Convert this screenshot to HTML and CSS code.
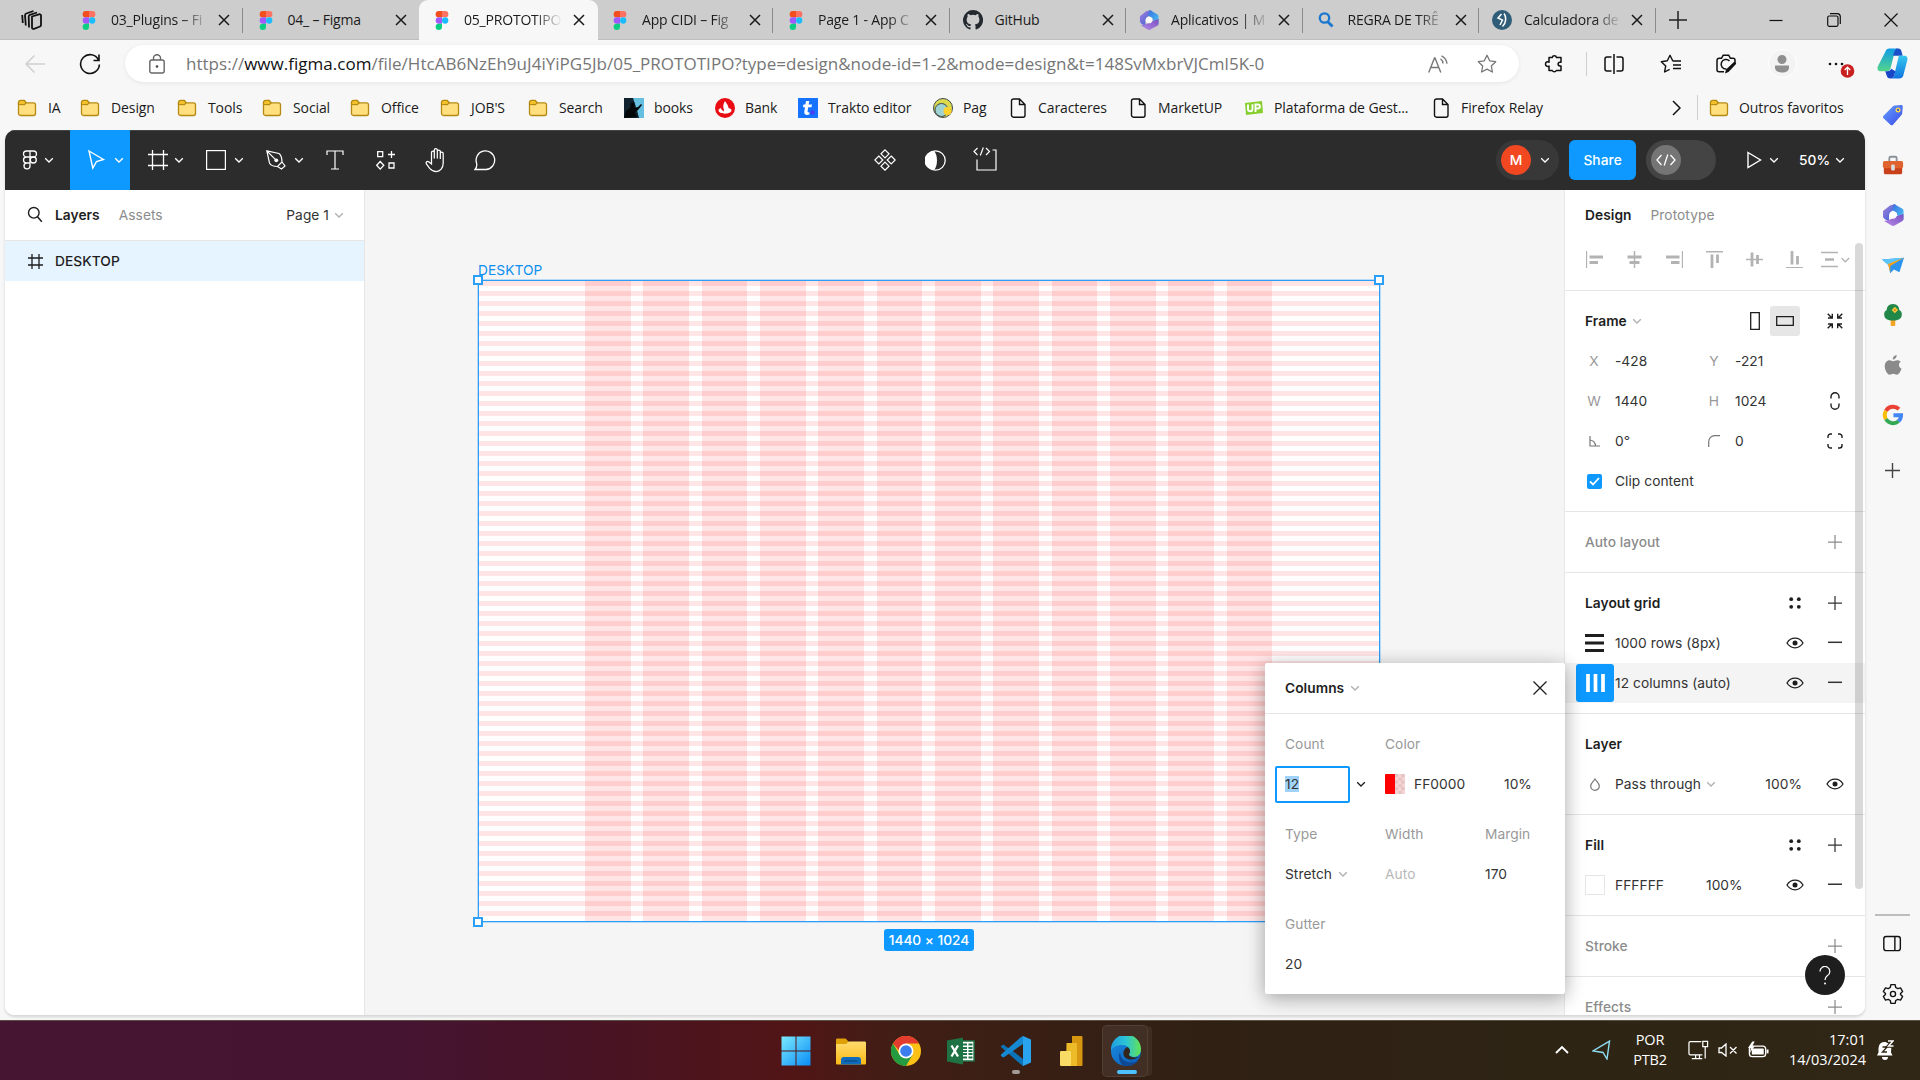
FILE: index.html
```html
<!DOCTYPE html>
<html lang="pt-BR">
<head>
<meta charset="utf-8">
<title>05_PROTOTIPO – Figma</title>
<link rel="stylesheet" href="styles.css">
</head>
<body>
<svg class="defs" aria-hidden="true">
  <defs>
    <linearGradient id="g-m1" x1="0" y1="0" x2="1" y2="1"><stop offset="0" stop-color="#a77fe0"/><stop offset="1" stop-color="#2b5fd0"/></linearGradient>
    <linearGradient id="g-m2" x1="0" y1="0" x2="1" y2="1"><stop offset="0" stop-color="#3a6fe0"/><stop offset="1" stop-color="#4cc6f5"/></linearGradient>
    <linearGradient id="g-m3" x1="0" y1="1" x2="1" y2="0"><stop offset="0" stop-color="#b58be8"/><stop offset="1" stop-color="#7a4fc0"/></linearGradient>
    <linearGradient id="g-win" x1="0" y1="0" x2="1" y2="1"><stop offset="0" stop-color="#7aeaff"/><stop offset="1" stop-color="#0a8cf5"/></linearGradient>
    <linearGradient id="g-fold" x1="0" y1="0" x2="0" y2="1"><stop offset="0" stop-color="#ffdc6e"/><stop offset="1" stop-color="#fbb915"/></linearGradient>
    <linearGradient id="g-edge1" x1="0" y1="0" x2="1" y2="0"><stop offset="0" stop-color="#1f9fe0"/><stop offset=".5" stop-color="#2cc3d5"/><stop offset="1" stop-color="#63e353"/></linearGradient>
    <linearGradient id="g-edge2" x1="0" y1="0" x2="1" y2="1"><stop offset="0" stop-color="#1c8fe0"/><stop offset="1" stop-color="#0a58b8"/></linearGradient>
    <linearGradient id="g-cop1" x1="0" y1="0" x2="0" y2="1"><stop offset="0" stop-color="#0f9be8"/><stop offset="1" stop-color="#54d68a"/></linearGradient>
    <linearGradient id="g-cop2" x1="0" y1="0" x2="0" y2="1"><stop offset="0" stop-color="#35c8ee"/><stop offset="1" stop-color="#1173e0"/></linearGradient>
    <linearGradient id="g-tag" x1="0" y1="0" x2="1" y2="1"><stop offset="0" stop-color="#62a2ff"/><stop offset="1" stop-color="#3d49e8"/></linearGradient>

    <symbol id="figma" viewBox="0 0 12 18">
      <path fill="#f24e1e" d="M6 0H3a3 3 0 0 0 0 6h3z"/><path fill="#ff7262" d="M6 0h3a3 3 0 0 1 0 6H6z"/>
      <path fill="#a259ff" d="M6 6H3a3 3 0 0 0 0 6h3z"/><circle fill="#1abcfe" cx="9" cy="9" r="3"/>
      <path fill="#0acf83" d="M6 12H3a3 3 0 1 0 3 3z"/>
    </symbol>
    <symbol id="close" viewBox="0 0 12 12"><path d="M1 1l10 10M11 1L1 11" fill="none" stroke="currentColor" stroke-width="1.5"/></symbol>
    <symbol id="folder" viewBox="0 0 20 20">
      <path d="M1.5 4.5a2 2 0 0 1 2-2h3.700l2 2.400H16.500a2 2 0 0 1 2 2V15.500a2 2 0 0 1-2 2h-13a2 2 0 0 1-2-2z" fill="#ffdf7e" stroke="#b58a12" stroke-width="1.300"/>
      <path d="M1.500 6.500v-2a2 2 0 0 1 2-2h3.700l2 2.200-1.800 2z" fill="#f2c12c" stroke="#b58a12" stroke-width="1.200"/>
    </symbol>
    <symbol id="page" viewBox="0 0 16 20"><path d="M3.500 1h6L15 6.500v10.700a2 2 0 0 1-2 2H3.500a2 2 0 0 1-2-2V3a2 2 0 0 1 2-2zM9.500 1.200v5.300h5.300" fill="none" stroke="#111" stroke-width="1.400"/></symbol>
    <symbol id="chev" viewBox="0 0 10 10"><path d="M1.200 3.200L5 7l3.800-3.800" fill="none" stroke="currentColor" stroke-width="1.300"/></symbol>
    <symbol id="plus" viewBox="0 0 16 16"><path d="M8 1v14M1 8h14" fill="none" stroke="currentColor" stroke-width="1.250"/></symbol>
    <symbol id="minus" viewBox="0 0 16 16"><path d="M1 7.300h14" fill="none" stroke="currentColor" stroke-width="1.500"/></symbol>
    <symbol id="eye" viewBox="0 0 18 12"><path d="M1 6C3 2.800 5.800 1.200 9 1.200S15 2.800 17 6c-2 3.200-4.800 4.800-8 4.800S3 9.200 1 6z" fill="none" stroke="#1e1e1e" stroke-width="1.300"/><circle cx="9" cy="6" r="2.500" fill="#1e1e1e"/></symbol>
    <symbol id="dots" viewBox="0 0 12 12"><g fill="#1e1e1e"><circle cx="2.200" cy="2.200" r="1.900"/><circle cx="9.800" cy="2.200" r="1.900"/><circle cx="2.200" cy="9.800" r="1.900"/><circle cx="9.800" cy="9.800" r="1.900"/></g></symbol>
    <symbol id="m365" viewBox="0 0 22 22">
      <path d="M8 1.500L13 0l2 3-5 4-3 4v6.500L2.500 15 1 13V7z" fill="url(#g-m1)"/>
      <path d="M12 0l8 4.600c1 .6 1.500 1.400 1.500 2.400v8.500L15 11V9l-5-3z" fill="url(#g-m2)"/>
      <path d="M21.500 10v5c0 1-.5 1.800-1.400 2.300l-7.500 4.200a3 3 0 0 1-3 0L2 17l5-1 8-4z" fill="url(#g-m3)"/>
      <circle cx="11" cy="11" r="3.700" fill="#fff" opacity=".92"/>
    </symbol>
  </defs>
</svg>

<header class="tabs">
  <svg class="workspaces" viewBox="0 0 22 22"><g fill="none" stroke="#111" stroke-width="1.800" stroke-linejoin="round"><path d="M11 7.500l7-2.200c1-.3 2 .3 2 1.300v9.500c0 .7-.4 1.200-1 1.400l-6 2.300c-1 .4-2-.2-2-1.300z"/><path d="M8 18.500l-.3-11c0-.8.4-1.400 1.200-1.700L16 3.500"/><path d="M4.800 16.500L4 6.500c0-1 .5-1.700 1.300-2L12.500 2"/><path d="M1.800 14L1.200 6"/></g></svg>
  <div class="tab"><svg class="fav-figma"><use href="#figma"/></svg><span class="tab-title">03_Plugins – Fi</span><svg class="tab-x"><use href="#close"/></svg></div>
  <div class="tab no-div"><svg class="fav-figma"><use href="#figma"/></svg><span class="tab-title whole">04_ – Figma</span><svg class="tab-x"><use href="#close"/></svg></div>
  <div class="tab active"><svg class="fav-figma"><use href="#figma"/></svg><span class="tab-title">05_PROTOTIPO</span><svg class="tab-x"><use href="#close"/></svg></div>
  <div class="tab"><svg class="fav-figma"><use href="#figma"/></svg><span class="tab-title">App CIDI – Fig</span><svg class="tab-x"><use href="#close"/></svg></div>
  <div class="tab"><svg class="fav-figma"><use href="#figma"/></svg><span class="tab-title">Page 1 - App C</span><svg class="tab-x"><use href="#close"/></svg></div>
  <div class="tab"><svg class="fav" viewBox="0 0 16 16"><path fill="#24292f" d="M8 0a8 8 0 0 0-2.530 15.590c.4.070.55-.17.550-.38v-1.490c-2.010.37-2.530-.49-2.690-.94-.09-.23-.48-.94-.82-1.130-.28-.15-.68-.52-.01-.53.63-.01 1.080.58 1.230.82.720 1.210 1.870.87 2.330.66.070-.52.280-.87.510-1.070-1.780-.2-3.640-.89-3.640-3.950 0-.87.310-1.590.82-2.150-.08-.2-.36-1.020.08-2.120 0 0 .67-.21 2.200.82a7.600 7.600 0 0 1 4 0c1.530-1.040 2.200-.82 2.200-.82.440 1.100.160 1.920.080 2.120.51.560.82 1.270.82 2.150 0 3.070-1.870 3.750-3.650 3.950.29.250.54.730.54 1.480v2.200c0 .21.150.46.550.38A8 8 0 0 0 8 0z"/></svg><span class="tab-title whole">GitHub</span><svg class="tab-x"><use href="#close"/></svg></div>
  <div class="tab"><svg class="fav"><use href="#m365"/></svg><span class="tab-title">Aplicativos | M</span><svg class="tab-x"><use href="#close"/></svg></div>
  <div class="tab"><svg class="fav" viewBox="0 0 20 20"><circle cx="8.500" cy="8" r="4.700" fill="none" stroke="#1b78d0" stroke-width="2.300"/><path d="M12 12l4.500 4.500" stroke="#1b78d0" stroke-width="2.800"/></svg><span class="tab-title">REGRA DE TRÊ</span><svg class="tab-x"><use href="#close"/></svg></div>
  <div class="tab"><svg class="fav" viewBox="0 0 20 20"><circle cx="10" cy="10" r="10" fill="#2f5d77"/><path d="M9.500 4L6 8l4.500 2L8 15M12 3.500c2.500 3 2.500 9-1.500 13" fill="none" stroke="#fff" stroke-width="1.500"/></svg><span class="tab-title">Calculadora de</span><svg class="tab-x"><use href="#close"/></svg></div>
  <svg class="new-tab" viewBox="0 0 18 18"><path d="M9 0v18M0 9h18" stroke="#222" stroke-width="1.500"/></svg>
  <div class="win-buttons">
    <svg viewBox="0 0 14 14"><path d="M0.500 7.500h13" stroke="#111" stroke-width="1.200"/></svg>
    <svg viewBox="0 0 14 14"><path d="M3 .7h7.500a3 3 0 0 1 2.800 2.800V11" fill="none" stroke="#111" stroke-width="1.200"/><rect x=".7" y="3" width="10.300" height="10.300" rx="1.500" fill="none" stroke="#111" stroke-width="1.200"/></svg>
    <svg viewBox="0 0 14 14"><path d="M.5.5l13 13M13.500.5l-13 13" stroke="#111" stroke-width="1.200"/></svg>
  </div>
</header>

<div class="window">
  <div class="main">
    <nav class="nav">
      <div class="nav-btn back"><svg width="20" height="18" viewBox="0 0 20 18"><path d="M20 9H1M9.500.5L1 9l8.500 8.500" fill="none" stroke="#cfcfcf" stroke-width="1.500"/></svg></div>
      <div class="nav-btn reload"><svg width="22" height="22" viewBox="0 0 22 22"><path d="M19.500 7A9.400 9.400 0 1 0 20.400 11.500M20 1.500V7.500H14.500" fill="none" stroke="#111" stroke-width="1.600"/></svg></div>
      <div class="address">
        <svg width="16" height="20" viewBox="0 0 16 20"><rect x=".8" y="6" width="14.400" height="13" rx="2" fill="none" stroke="#666" stroke-width="1.400"/><path d="M4.500 6V4.200a3.500 3.500 0 0 1 7 0V6" fill="none" stroke="#666" stroke-width="1.400"/><circle cx="8" cy="12.500" r="1.300" fill="#444"/></svg>
        <span class="url">https://<b>www.figma.com</b>/file/HtcAB6NzEh9uJ4iYiPG5Jb/05_PROTOTIPO?type=design&amp;node-id=1-2&amp;mode=design&amp;t=148SvMxbrVJCml5K-0</span>
        <svg class="read" width="20" height="18" viewBox="0 0 20 18"><path d="M.7 17.500L6.500 3h.5l5.800 14.500M2.800 12.500h8M12.500 3.800a6 6 0 0 1 2.500 4.700M13.500.8a10 10 0 0 1 5.500 8" fill="none" stroke="#777" stroke-width="1.400"/></svg>
        <svg class="star" width="20" height="20" viewBox="0 0 20 20"><path d="M10 1.300l2.700 5.500 6 .9-4.400 4.300 1.100 6-5.400-2.900L4.600 18l1.100-6L1.300 7.700l6-.9z" fill="none" stroke="#777" stroke-width="1.300" stroke-linejoin="round"/></svg>
      </div>
      <div class="nav-btn ext"><svg width="20" height="20" viewBox="0 0 20 20"><path d="M5 3.500h3.200a2.200 2.200 0 0 1 4.300 0H17v4.700h-1a1.900 1.900 0 0 0 0 3.800h1v4.500h-4.700a2.200 2.200 0 0 1-4 0H5V12a2.200 2.200 0 0 1-3.500-2A2.200 2.200 0 0 1 5 8.200z" fill="none" stroke="#111" stroke-width="1.500" stroke-linejoin="round"/></svg></div>
      <div class="nav-btn"><svg width="20" height="20" viewBox="0 0 20 20"><path d="M10 0v20M7.500 3H3a2 2 0 0 0-2 2v10a2 2 0 0 0 2 2h4.500M12.500 3H17a2 2 0 0 1 2 2v10a2 2 0 0 1-2 2h-4.500" fill="none" stroke="#111" stroke-width="1.500"/></svg></div>
      <div class="nav-btn"><svg width="21" height="20" viewBox="0 0 21 20"><path d="M12.700 6.800L10 1.300 7.300 6.800l-6 .9L5.700 12l-1.100 6 5-2.600M12.500 7h8.500M13 11h8M13 14.500h8" fill="none" stroke="#111" stroke-width="1.400" stroke-linejoin="round"/></svg></div>
      <div class="nav-btn"><svg width="21" height="20" viewBox="0 0 21 20"><path d="M8 17.800H3a2 2 0 0 1-2-2V6.300a2 2 0 0 1 2-2h2.500L7.200 1.200h5.500l1.700 3.100H17a2 2 0 0 1 2 2V8M13.500 7a4.800 4.800 0 1 0-3 8" fill="none" stroke="#111" stroke-width="1.500"/><path d="M9 19.500l1-4 8-7.500a1.500 1.500 0 0 1 2 2l-7.500 8z" fill="#111"/></svg></div>
      <div class="nav-btn"><span class="avatar"><svg width="16" height="18" viewBox="0 0 16 18"><circle cx="8" cy="4.500" r="4.500" fill="#8f8f8f"/><path d="M1 10.500h14v2c0 3-2.500 5-7 5s-7-2-7-5z" fill="#8f8f8f"/></svg></span></div>
      <div class="nav-btn menu"><svg width="28" height="28" viewBox="0 0 28 28"><g fill="#111"><circle cx="3" cy="14" r="1.300"/><circle cx="9" cy="14" r="1.300"/><circle cx="15" cy="14" r="1.300"/></g><circle cx="20.500" cy="21" r="6.800" fill="#c8201f"/><path d="M20.500 25v-7.500M17.700 20l2.800-2.800 2.800 2.800" fill="none" stroke="#fff" stroke-width="1.300"/></svg></div>
    </nav>

    <nav class="bookmarks">
      <div class="bm"><svg><use href="#folder"/></svg><span>IA</span></div>
      <div class="bm"><svg><use href="#folder"/></svg><span>Design</span></div>
      <div class="bm"><svg><use href="#folder"/></svg><span>Tools</span></div>
      <div class="bm"><svg><use href="#folder"/></svg><span>Social</span></div>
      <div class="bm"><svg><use href="#folder"/></svg><span>Office</span></div>
      <div class="bm"><svg><use href="#folder"/></svg><span>JOB'S</span></div>
      <div class="bm"><svg><use href="#folder"/></svg><span>Search</span></div>
      <div class="bm"><svg viewBox="0 0 20 20"><rect width="20" height="20" fill="#10222d"/><path d="M9 0h11v20h-5l-2-8z" fill="#67bfe0"/><path d="M0 20l2-7 4-3 1-5 3-1 1 3-1 3 4-1 3-3 1 1-4 5-3 2 2 5z" fill="#03070a"/></svg><span>books</span></div>
      <div class="bm"><svg viewBox="0 0 20 20"><circle cx="10" cy="10" r="10" fill="#e90c12"/><path d="M10 3c1 2 3.500 4 3.500 7 2 .5 3 1.200 3 2.300 0 2-3 3.400-6.500 3.400s-6.500-1.400-6.500-3.400c0-1 1-1.800 2.500-2.300 0 2 2 2.500 3 3.500.5-3.500-2.500-4.500 1-10.500z" fill="#fff"/></svg><span>Bank</span></div>
      <div class="bm"><svg viewBox="0 0 20 20"><rect width="20" height="20" fill="#1573ff"/><path d="M8 3h3.300L10.600 6.500h3.400l-.5 2.800h-3.300l-.6 3.700c-.2 1.400.8 1.700 2 1.200l-.3 2.300c-3 1.200-5.500 0-5-3l.7-4.200H5l.4-2.800h2z" fill="#fff"/><circle cx="14.500" cy="14.500" r="2.300" fill="#4b3df0"/></svg><span>Trakto editor</span></div>
      <div class="bm"><svg viewBox="0 0 20 20"><circle cx="10" cy="10" r="9.500" fill="#dcd94f" stroke="#3d4a4d"/><circle cx="8.500" cy="12" r="6.500" fill="#9fd3d2" stroke="#3d4a4d"/><circle cx="14.500" cy="13" r="4" fill="#ffd22e"/></svg><span>Pag</span></div>
      <div class="bm pg"><svg><use href="#page"/></svg><span>Caracteres</span></div>
      <div class="bm pg"><svg><use href="#page"/></svg><span>MarketUP</span></div>
      <div class="bm"><svg viewBox="0 0 20 20"><path d="M1 5l17-2 1 12-17 2z" fill="#86cf2c"/><path d="M4 6.500v4.500c0 3 4.500 3 4.500 0V6.300M11.500 14V6.500h2.200c3 0 3 4 0 4h-2" fill="none" stroke="#fff" stroke-width="1.900"/></svg><span>Plataforma de Gest...</span></div>
      <div class="bm pg"><svg><use href="#page"/></svg><span>Firefox Relay</span></div>
      <svg class="bm-more" viewBox="0 0 9 16"><path d="M1 1l7 7-7 7" fill="none" stroke="#111" stroke-width="1.500"/></svg>
      <div class="bm other"><svg><use href="#folder"/></svg><span>Outros favoritos</span></div>
    </nav>

    <div class="app">
      <div class="fig-bar">
        <div class="fig-left">
          <div class="tool logo"><svg width="16" height="20" viewBox="0 0 16 20"><g fill="none" stroke="#fff" stroke-width="1.300"><path d="M8 1H4.500a3 3 0 0 0 0 6H8zM8 1h3.500a3 3 0 0 1 0 6H8zM8 7H4.500a3 3 0 0 0 0 6H8zM4.500 13a3 3 0 1 0 3.500 3v-3z"/><circle cx="11.300" cy="10" r="3"/></g></svg><svg class="chev"><use href="#chev"/></svg></div>
          <div class="tool active"><svg width="20" height="22" viewBox="0 0 20 22"><path d="M3 2l14.500 8.500-7 2.200L6.800 19z" fill="none" stroke="#fff" stroke-width="1.400"/></svg><svg class="chev"><use href="#chev"/></svg></div>
          <div class="tool frame"><svg width="20" height="20" viewBox="0 0 20 20"><path d="M4.500 0v20M15.500 0v20M0 4.500h20M0 15.500h20" stroke="#fff" stroke-width="1.300"/></svg><svg class="chev"><use href="#chev"/></svg></div>
          <div class="tool"><svg width="20" height="20" viewBox="0 0 20 20"><rect x=".6" y=".6" width="18.800" height="18.800" fill="none" stroke="#fff" stroke-width="1.200"/></svg><svg class="chev"><use href="#chev"/></svg></div>
          <div class="tool"><svg width="20" height="20" viewBox="0 0 20 20"><g fill="none" stroke="#fff" stroke-width="1.200"><path d="M.8.8L13 3.500c2 1.500 3 5 3 8.500l-4.500 4.500C8 16.500 4.500 15 3.500 13zM.8.8l9 9M16 12l3 4-3.500 3-4-2.500"/></g><circle cx="10.300" cy="10.300" r="1.900" fill="#fff"/></svg><svg class="chev"><use href="#chev"/></svg></div>
          <div class="tool solo"><svg width="18" height="20" viewBox="0 0 18 20"><path d="M1 5V1h16v4M9 1v18M5 19h8" fill="none" stroke="#fff" stroke-width="1.200"/></svg></div>
          <div class="tool solo right-shift"><svg width="20" height="20" viewBox="0 0 20 20"><g fill="none" stroke="#fff" stroke-width="1.300"><path d="M1.700 1.700h5v5h-5zM13 13h5v5h-5zM4.200 11.500l3.600 3.800-3.600 3.800-3.500-3.800zM15.500 1v7M12 4.500h7"/></g></svg></div>
          <div class="tool solo"><svg width="22" height="26" viewBox="0 0 22 26"><path d="M6 14V5.500c0-2 2.800-2 2.800 0V3c0-2 3-2 3 0v1.500c0-2 3-2 3 0V6.500c0-1.800 2.900-1.800 2.900 0V16c0 5-3 8.500-7 8.500-3 0-4.500-1-6.500-3.200L.9 17c-1-2 .8-3.500 2.600-2L6 17zM8.800 5v6.500M11.800 4v7.500M14.800 6v6" transform="translate(1.500 0)" fill="none" stroke="#fff" stroke-width="1.250"/></svg></div>
          <div class="tool solo"><svg width="22" height="22" viewBox="0 0 22 22"><path d="M1 20.500c1.500-1.700 2-3.500 1.700-6A9.300 9.300 0 1 1 12 20.500z" fill="none" stroke="#fff" stroke-width="1.300"/></svg></div>
        </div>
        <div class="fig-mid">
          <div class="tool solo"><svg width="22" height="22" viewBox="0 0 22 22"><path d="M11 .8l4 4-4 4-4-4zM11 13.200l4 4-4 4-4-4zM4.800 7l4 4-4 4-4-4zM17.200 7l4 4-4 4-4-4z" fill="none" stroke="#fff" stroke-width="1.200"/></svg></div>
          <div class="tool solo"><svg width="21" height="21" viewBox="0 0 21 21"><circle cx="10.500" cy="10.500" r="9.700" fill="none" stroke="#fff" stroke-width="1.300"/><path d="M9 1C13 5 13 16 9 20A9.500 9.500 0 0 1 9 1z" fill="#fff"/></svg></div>
          <div class="tool solo"><svg width="24" height="26" viewBox="0 0 24 26"><path d="M4.500 1L1 4.500 4.500 8M13 1l3.500 3.500L13 8M10.300.5L7.300 8.500M19.500 3H23v20H4V12.500" fill="none" stroke="#fff" stroke-width="1.200"/></svg></div>
        </div>
        <div class="fig-right">
          <div class="user"><span class="user-m">M</span><svg class="chev"><use href="#chev"/></svg></div>
          <div class="share">Share</div>
          <div class="dev"><span><svg width="20" height="12" viewBox="0 0 20 12"><path d="M5.500 1L1 6l4.500 5M14.500 1L19 6l-4.500 5M11.800.5L8.200 11.500" fill="none" stroke="#fff" stroke-width="1.300"/></svg></span></div>
          <div class="play"><svg width="15" height="18" viewBox="0 0 15 18"><path d="M1 1.500L13.500 9 1 16.500z" fill="none" stroke="#fff" stroke-width="1.400"/></svg><svg class="chev"><use href="#chev"/></svg></div>
          <div class="zoom">50%<svg class="chev"><use href="#chev"/></svg></div>
        </div>
      </div>

      <div class="fig-body">
        <aside class="layers">
          <div class="layers-head"><svg width="16" height="18" viewBox="0 0 16 18"><circle cx="6.800" cy="6.800" r="5.300" fill="none" stroke="#1e1e1e" stroke-width="1.400"/><path d="M10.500 10.800l4.300 5" stroke="#1e1e1e" stroke-width="1.500"/></svg><b>Layers</b><span class="mute">Assets</span><span class="page-name">Page 1</span><svg class="chev"><use href="#chev"/></svg></div>
          <div class="layer-row"><svg width="15" height="15" viewBox="0 0 15 15"><path d="M4 0v15M11 0v15M0 4h15M0 11h15" stroke="#1e1e1e" stroke-width="1.300"/></svg><b>DESKTOP</b></div>
        </aside>

        <section class="canvas">
          <div class="artboard">
            <span class="art-label">DESKTOP</span>
            <div class="cols"><i></i><i></i><i></i><i></i><i></i><i></i><i></i><i></i><i></i><i></i><i></i><i></i></div>
            <i class="handle tl"></i><i class="handle tr"></i><i class="handle bl"></i>
            <span class="art-size">1440 × 1024</span>
          </div>
        </section>

        <aside class="panel">
          <div class="panel-tabs"><b>Design</b><span class="mute">Prototype</span></div>
          <div class="align">
            <svg viewBox="0 0 17 17"><path d="M.5 0v17" stroke-width="1.300"/><path d="M3.500 6H17M3.500 11.500H12" stroke-width="2.800"/></svg>
            <svg viewBox="0 0 17 17"><path d="M8.500 0v17" stroke-width="1.500"/><path d="M1.500 6h14M3.500 11.500h10" stroke-width="2.800"/></svg>
            <svg viewBox="0 0 17 17"><path d="M16.500 0v17" stroke-width="1.300"/><path d="M0 6h13.500M5 11.500h8.500" stroke-width="2.800"/></svg>
            <svg viewBox="0 0 17 17"><path d="M0 .7h17" stroke-width="1.500"/><path d="M6 3.500V17M11.500 3.500V12" stroke-width="2.800"/></svg>
            <svg viewBox="0 0 17 17"><path d="M0 8.500h17" stroke-width="1.500"/><path d="M6 1.500v14M11.500 4v9" stroke-width="2.800"/></svg>
            <svg viewBox="0 0 17 17"><path d="M0 17h17" stroke-width="2"/><path d="M6 0v13.500M11.500 5v8.500" stroke-width="2.800"/></svg>
            <svg class="spread" viewBox="0 0 29 17"><path d="M0 1.500h17M0 15.500h17" stroke-width="1.500"/><path d="M4 8.500h9" stroke-width="2.500"/><path d="M20.500 7l3.800 3.800L28.200 7" stroke-width="1.300"/></svg>
          </div>
          <section class="sec">
            <div class="row">
              <b>Frame</b><svg class="chev gray"><use href="#chev"/></svg><span class="grow"></span>
              <span class="orient"><svg width="10" height="18" viewBox="0 0 10 18"><path d="M.7.7h8.600v16.600H.7z" fill="none" stroke="#1e1e1e" stroke-width="1.300"/></svg></span>
              <span class="orient on"><svg width="18" height="10" viewBox="0 0 18 10"><path d="M.7.7h16.600v8.600H.7z" fill="none" stroke="#1e1e1e" stroke-width="1.300"/></svg></span>
              <svg class="ic shrink" viewBox="0 0 16 16"><path d="M.7.7L5 5M1 5h4.300V.7M15.300.7L11 5M15 5h-4.300V.7M.7 15.300L5 11M1 11h4.300v4.300M15.300 15.300L11 11M15 11h-4.300v4.300" fill="none" stroke="#1e1e1e" stroke-width="1.400"/></svg>
            </div>
            <div class="props"><i>X</i><span>-428</span><i>Y</i><span>-221</span></div>
            <div class="props"><i>W</i><span>1440</span><i>H</i><span>1024</span><svg width="10" height="18" viewBox="0 0 10 18"><path d="M1 6.500V4.800a4 4 0 0 1 8 0v1.700M1 11.500v1.700a4 4 0 0 0 8 0v-1.700" fill="none" stroke="#1e1e1e" stroke-width="1.400"/></svg></div>
            <div class="props"><i><svg width="11" height="11" viewBox="0 0 11 11"><path d="M1 0v10h10M1 4a6 6 0 0 1 5.500 6" fill="none" stroke="#777" stroke-width="1.200"/></svg></i><span>0°</span><i><svg width="12" height="12" viewBox="0 0 12 12"><path d="M.7 12V7A6 6 0 0 1 7 .7h5" fill="none" stroke="#777" stroke-width="1.200"/></svg></i><span>0</span><svg width="16" height="16" viewBox="0 0 16 16"><path d="M1 5V3.500A2.500 2.500 0 0 1 3.500 1H5M11 1h1.500A2.500 2.500 0 0 1 15 3.500V5M15 11v1.500a2.500 2.500 0 0 1-2.500 2.500H11M5 15H3.500A2.500 2.500 0 0 1 1 12.500V11" fill="none" stroke="#1e1e1e" stroke-width="1.400"/></svg></div>
            <div class="props"><i><span class="check"><svg width="11" height="9" viewBox="0 0 11 9"><path d="M1 4.500L4 7.500 10 1" fill="none" stroke="#fff" stroke-width="1.800"/></svg></span></i><span class="wide">Clip content</span></div>
          </section>
          <section class="sec"><div class="row off"><span class="t">Auto layout</span><span class="grow"></span><svg class="ic sm"><use href="#plus"/></svg></div></section>
          <section class="sec">
            <div class="row"><b>Layout grid</b><span class="grow"></span><svg class="ic four"><use href="#dots"/></svg><svg class="ic sm"><use href="#plus"/></svg></div>
            <div class="row"><svg class="lead" viewBox="0 0 19 18"><path d="M0 1.500h19M0 9h19M0 16.500h19" stroke="#1e1e1e" stroke-width="3"/></svg><span>1000 rows (8px)</span><span class="grow"></span><svg class="ic eye"><use href="#eye"/></svg><svg class="ic sm"><use href="#minus"/></svg></div>
            <div class="row selected"><span class="grid-btn"><svg viewBox="0 0 19 18"><path d="M2 0v18M9.500 0v18M17 0v18" stroke="#fff" stroke-width="3.700"/></svg></span><span>12 columns (auto)</span><span class="grow"></span><svg class="ic eye"><use href="#eye"/></svg><svg class="ic sm"><use href="#minus"/></svg></div>
          </section>
          <section class="sec">
            <div class="row"><b>Layer</b></div>
            <div class="row"><svg class="drop" viewBox="0 0 10 13"><path d="M5 1C6.500 3.500 9.300 5 9.300 8A4.300 4.300 0 0 1 .7 8C.7 5 3.500 3.500 5 1z" fill="none" stroke="#777" stroke-width="1.200"/></svg><span>Pass through</span><svg class="chev gray"><use href="#chev"/></svg><span class="grow"></span><span class="pct">100%</span><svg class="ic eye"><use href="#eye"/></svg></div>
          </section>
          <section class="sec">
            <div class="row"><b>Fill</b><span class="grow"></span><svg class="ic four"><use href="#dots"/></svg><svg class="ic sm"><use href="#plus"/></svg></div>
            <div class="row"><span class="white-chip"></span><span class="hex">FFFFFF</span><span>100%</span><span class="grow"></span><svg class="ic eye"><use href="#eye"/></svg><svg class="ic sm"><use href="#minus"/></svg></div>
          </section>
          <section class="sec"><div class="row off"><span class="t">Stroke</span><span class="grow"></span><svg class="ic sm"><use href="#plus"/></svg></div></section>
          <section class="sec"><div class="row off"><span class="t">Effects</span><span class="grow"></span><svg class="ic sm"><use href="#plus"/></svg></div></section>
          <span class="scrollbar"></span>
          <span class="help"><svg width="12" height="19" viewBox="0 0 12 19"><path d="M1 5.500a4.900 4.900 0 1 1 7.500 4C6.700 10.700 6 11.500 6 14" fill="none" stroke="#fff" stroke-width="1.300"/><circle cx="6" cy="17.500" r="1" fill="#fff"/></svg></span>
        </aside>

        <div class="popover">
          <div class="pop-head"><b>Columns</b><svg class="chev gray"><use href="#chev"/></svg><span class="grow"></span><svg class="pop-x" viewBox="0 0 14 14"><path d="M.5.5l13 13M13.500.5l-13 13" stroke="#1e1e1e" stroke-width="1.300"/></svg></div>
          <div class="pop-grid">
            <label>Count</label><label>Color</label><label></label>
            <div class="count"><span class="field"><mark>12</mark></span><svg class="chev"><use href="#chev"/></svg></div>
            <div class="color"><span class="swatch"></span>FF0000</div>
            <div class="ten">10%</div>
          </div>
          <div class="pop-grid">
            <label>Type</label><label>Width</label><label>Margin</label>
            <div>Stretch<svg class="chev gray"><use href="#chev"/></svg></div><div class="auto">Auto</div><div>170</div>
          </div>
          <div class="pop-grid"><label>Gutter</label><label></label><label></label><div>20</div></div>
        </div>
      </div>
    </div>
  </div>

  <aside class="rail">
    <svg class="copilot" viewBox="0 0 32 32"><path d="M9 3c.6-1.500 1.800-2.500 3.500-2.500H22c-2 0-3 1-3.700 3L14 21c-.6 2-1.800 3-4 3H4c-3 0-4-2-3.200-5z" fill="url(#g-cop1)"/><path d="M20 .5h2c2 0 2.800 1 3.300 3L26.500 8H20l-3.500 0L18 3z" fill="#1a4fc8"/><path d="M22.500 8H28c3 0 4 2 3.200 5L27 29c-.6 1.600-2 2.500-3.800 2.500H14c2 0 3-1 3.700-3z" fill="url(#g-cop2)"/><path d="M14 31.500c-2.500 0-3.500-1-4-3L8.500 24H11c2 0 3-.8 3.600-2.500L19 24l-1.500 5c-.6 1.700-1.500 2.500-3.500 2.500z" fill="#1746c8"/></svg>
    <svg viewBox="0 0 24 24"><path d="M14 1.500l7-.5c1 0 1.700.6 1.700 1.700L22 10c0 .7-.3 1.300-.8 1.900L12 22.500c-.8.900-2 .9-2.800.1l-7.500-7c-.9-.8-.9-2 0-2.900L12 2.500c.6-.6 1.200-.9 2-1z" fill="url(#g-tag)"/><circle cx="17.500" cy="6.500" r="2" fill="#3a55d8" stroke="#ffd44a" stroke-width="1.500"/></svg>
    <svg viewBox="0 0 24 24"><path d="M8 8V4.500C8 3.500 8.500 3 9.500 3h5c1 0 1.500.5 1.500 1.500V8" fill="none" stroke="#8b9299" stroke-width="2"/><rect x="2" y="12" width="20" height="10" rx="1.500" fill="#c8411a"/><rect x="1" y="7.500" width="22" height="8" rx="2" fill="#e0622e"/><rect x="10" y="11.500" width="4" height="6.500" rx="1.300" fill="#d9dde0"/></svg>
    <svg viewBox="0 0 22 22"><use href="#m365" width="22" height="22"/></svg>
    <svg viewBox="0 0 24 24"><path d="M0 6l24-2-5 16-6-3-4 4-2-9z" fill="#2c93ee"/><path d="M24 4L7 12 0 6z" fill="#5cc5f7"/><path d="M24 4L9 13v7l-2.500-9z" fill="#f7a21b"/></svg>
    <svg viewBox="0 0 24 24"><rect x="9.500" y="15" width="5" height="9" rx="1" fill="#f3a423"/><path d="M12 0c5 0 7 4 6.800 6.500C21.500 8 22 10 21.500 12.500 21 16 18 18 12 18s-9-2-9.500-5.500C2 10 2.500 8 5.200 6.500 5 4 7 0 12 0z" fill="#22884a"/><path d="M14 3l3.500 3.500L14 10l-3.500-3.500z" fill="#ffc83a"/><circle cx="14" cy="6.500" r="1" fill="#d87a10"/></svg>
    <svg viewBox="0 0 24 24"><path d="M16 1c.2 2.500-2 5-4.300 5C11.500 3.500 13.500 1.300 16 1zM20.500 8.500c-3 1.800-2.500 6 .8 7.500-1 3-3 6.500-5.200 6.500-1.500 0-2-.9-3.800-.9s-2.400.9-3.800.9C6 22.500 3 17.500 3 13.300c0-4 2.500-6.500 5.200-6.500 1.700 0 2.700 1 4 1s2.300-1 4.400-1c1.500 0 3 .6 3.900 1.700z" fill="#8a8a8a"/></svg>
    <svg viewBox="0 0 24 24"><g fill="none" stroke-width="4.300"><path d="M4.300 7.500A9 9 0 0 1 18.500 5.700" stroke="#ea4335"/><path d="M4.300 16.500a9 9 0 0 1 0-9" stroke="#fbbc05"/><path d="M18 18.700a9 9 0 0 1-13.700-2.200" stroke="#34a853"/><path d="M12.500 12.300h8.300a8.800 8.800 0 0 1-2.800 6.400" stroke="#4285f4"/></g></svg>
    <svg class="rail-plus" viewBox="0 0 16 16"><path d="M8 0v16M0 8h16" stroke="#444" stroke-width="1.500"/></svg>
    <span class="rail-line"></span>
    <svg class="rail-panel" viewBox="0 0 20 18"><rect x=".8" y="1.500" width="17.500" height="15" rx="2.500" fill="none" stroke="#111" stroke-width="1.500"/><path d="M12.500 1.500v15" stroke="#111" stroke-width="1.500"/></svg>
    <svg class="rail-gear" viewBox="0 0 24 24"><path d="M9.700 1.800h4.600l.7 3.100 2.200 1.300 3-.9 2.300 4-2.300 2.200v1l2.300 2.200-2.300 4-3-.9-2.200 1.300-.7 3.100H9.700L9 19.100l-2.200-1.300-3 .9-2.300-4 2.300-2.200v-1L1.500 9.300l2.300-4 3 .9L9 4.900z" fill="none" stroke="#111" stroke-width="1.500" stroke-linejoin="round"/><circle cx="12" cy="12" r="2.800" fill="none" stroke="#111" stroke-width="1.500"/></svg>
  </aside>
</div>

<footer class="taskbar">
  <div class="apps">
    <div class="slot"><svg viewBox="0 0 30 30"><path d="M.5.500h14v14H.5zM15.500.500h14v14h-14zM.5 15.500h14v14H.5zM15.500 15.500h14v14h-14z" fill="url(#g-win)"/></svg></div>
    <div class="slot"><svg viewBox="0 0 30 30"><path d="M0 4c0-1 .5-1.500 1.500-1.500h8L13 6v4H0z" fill="#e0a008"/><path d="M0 8h10l3-2.500h15.500c1 0 1.500.5 1.500 1.500v20c0 1-.5 1.500-1.500 1.500h-27C.5 28.500 0 28 0 27z" fill="url(#g-fold)"/><path d="M5 28.500V24c0-2 1-3 3-3h14c2 0 3 1 3 3v4.500z" fill="#0f6cbd"/><path d="M8.500 25h13" stroke="#0a4a86" stroke-width="1.300"/></svg></div>
    <div class="slot"><svg viewBox="0 0 30 30"><circle cx="15" cy="15" r="15" fill="#fbc116"/><path d="M2 7.500A15 15 0 0 0 15 30l6.500-11.300L8.500 18.700z" fill="#249a41"/><path d="M28 7.500H15l-6.500 7.500L2 7.500A15 15 0 0 1 28 7.500z" fill="#e33b2e"/><circle cx="15" cy="15" r="7.500" fill="#fff"/><circle cx="15" cy="15" r="5.800" fill="#3b7ded"/></svg></div>
    <div class="slot"><svg viewBox="0 0 30 30"><path d="M14 5h14v20H14z" fill="#fff" stroke="#1f7244" stroke-width="1.400"/><path d="M17 8.500h4M17 12h4M17 15h4M17 18h4M17 21.500h4M22.500 8.500h4M22.500 12h4M22.500 15h4M22.500 18h4M22.500 21.500h4" stroke="#1f7244" stroke-width="1.900"/><path d="M1 4.500L17 1.500v27L1 25.500z" fill="#1f7244"/><path d="M5.500 9.500l6.500 11M12 9.500l-6.500 11" stroke="#fff" stroke-width="2.300"/></svg></div>
    <div class="slot run"><svg viewBox="0 0 30 30"><path d="M22 0L8 12.700 2.500 8.500 0 10v1l20 17.500L22 30V23L8.500 12.500z" fill="#0d73b8"/><path d="M22 0v8L2.500 21.500 0 20v-1.500L20 1z" fill="#1689d2"/><path d="M22 0l8 3.500v23L22 30z" fill="#2aa4ef"/></svg></div>
    <div class="slot"><svg viewBox="0 0 30 30"><path d="M16 0h9c1 0 1.500.5 1.500 1.500v27c0 1-.5 1.500-1.500 1.500h-9z" fill="#d6960f"/><path d="M10.500 7h9c1 0 1.500.5 1.500 1.500V30H10z" fill="#eebb28"/><path d="M5 15h8.500c1 0 1.500.5 1.500 1.500V30H5.500c-1 0-1.500-.5-1.500-1.500v-12C4 15.500 4.300 15 5 15z" fill="#f8dc65"/></svg></div>
    <div class="slot current"><svg viewBox="0 0 30 30"><circle cx="15" cy="15" r="15" fill="url(#g-edge2)"/><path d="M9 16c0 7 6 11 12 10.500 3 0 5-1 7-2.500A15 15 0 0 1 12 29.700C8 26 7 20 9 16z" fill="#0e4a94"/><path d="M0 14A15 15 0 0 1 30 13c0 5-3 8-7 8-3 0-5-1-5-2.200 0-1 1-1.500 1-3.800 0-3-3-6-8-6C5.500 9 1 11.500 0 15z" fill="url(#g-edge1)"/><path d="M18 18.500c0-1 1-1.500 1-3.500 0-1.500-1-3-3-4-3 2-4 5-3.500 7.500.5 2.500 3 5 7.500 5 3 0 6-1.500 8-2.500-1 .3-3 .7-5 .5-3-.3-5-1.500-5-3z" fill="#32251a"/></svg></div>
  </div>
  <div class="tray">
    <svg class="t-up" viewBox="0 0 14 9"><path d="M1 8l6-6 6 6" fill="none" stroke="#fff" stroke-width="1.900"/></svg>
    <svg class="t-nav" viewBox="0 0 20 20"><path d="M17.500 1.200L1 11l10 1.500L15 19z" fill="none" stroke="#8fdcf3" stroke-width="1.400"/></svg>
    <div class="lang">POR<br>PTB2</div>
    <svg class="t-mon" viewBox="0 0 22 20"><path d="M14 1.200H2.500c-1 0-1.500.5-1.500 1.500v11c0 1 .5 1.500 1.500 1.500h12.500M8 15v4M12 15v4M4 19h11M15.500 1h5v5.500h-5zM18 6.500V19" fill="none" stroke="#fff" stroke-width="1.300"/></svg>
    <svg class="t-mute" viewBox="0 0 20 14"><path d="M1 5h2.500L8 1v12L3.500 9.500H1zM12 4l6.500 6.500M18.500 4L12 10.500" fill="none" stroke="#fff" stroke-width="1.300"/></svg>
    <svg class="t-bat" viewBox="0 0 22 18"><rect x="1.500" y="5" width="17" height="11" rx="3" fill="none" stroke="#fff" stroke-width="1.400"/><rect x="4" y="7.300" width="12.500" height="6.500" rx="1" fill="#fff"/><path d="M20.500 8.500v4" stroke="#fff" stroke-width="2"/><path d="M4.500 0L0 7h3L2 12l5-7H4.500L7 0z" fill="#fff"/></svg>
    <div class="clock">17:01<br>14/03/2024</div>
    <svg class="t-bell" viewBox="0 0 18 20"><path d="M1 15.500l1.500-3V8a6 6 0 0 1 7-6l6 3-.5 7.500 1.500 3zM6 17h6a3 3 0 0 1-6 0z" fill="#fff"/><path d="M6.500 7h4.500l-4.500 5h4.500" fill="none" stroke="#302716" stroke-width="1.400"/><path d="M12 1h5l-4.500 5h5" fill="none" stroke="#302716" stroke-width="3.500"/><path d="M12 1h5l-4.500 5h5" fill="none" stroke="#fff" stroke-width="1.400"/></svg>
  </div>
</footer>
</body>
</html>
```
FILE: styles.css
```css
* { box-sizing: border-box; }
body {
  margin: 0; width: 1920px; height: 1080px; overflow: hidden;
  display: flex; flex-direction: column;
  font-family: "Open Sans", "Noto Sans", sans-serif; font-size: 14px; color: #1b1b1b;
  background: #f7f7f7;
}
svg { display: block; flex: none; }
.defs { position: absolute; width: 0; height: 0; }
b { font-weight: 600; }
.grow { flex: 1; }

/* Tab strip */
.tabs { height: 40px; flex: none; display: flex; align-items: center; background: #cdcdcd; box-shadow: inset 0 -1px 0 #bdbdbd; }
.workspaces { width: 22px; height: 22px; margin: 0 23px 0 21px; }
.tab { position: relative; width: 176.500px; height: 40px; display: flex; align-items: center; padding-left: 13px; flex: none; }
.tab::after { content: ""; position: absolute; right: 0; top: 8px; width: 1px; height: 25px; background: #8a8a8a; }
.tab.no-div::after, .tab.active::after { display: none; }
.tab.active { width: 179px; background: #f7f7f7; border-radius: 9px 9px 0 0; }
.tab.active .tab-x { margin-left: 11px; }
.tab.active + .tab { width: 175px; padding-left: 12px; }
.fav-figma { width: 20px; height: 19px; margin-right: 12px; }
.fav { width: 20px; height: 20px; margin-right: 12px; }
.tab-title { width: 98px; height: 24px; line-height: 23px; white-space: nowrap; letter-spacing: -.2px; -webkit-mask-image: linear-gradient(90deg, #000 72%, transparent); mask-image: linear-gradient(90deg, #000 72%, transparent); }
.tab-title.whole { -webkit-mask-image: none; mask-image: none; }
.tab-x { width: 12px; height: 12px; margin-left: 9px; }
.new-tab { width: 18px; height: 18px; margin-left: 13px; }
.win-buttons { margin-left: auto; display: flex; gap: 43.500px; padding-right: 22px; }
.win-buttons svg { width: 14px; height: 14px; }

.window { height: 980px; flex: none; display: grid; grid-template-columns: 1865px 55px; background: #f7f7f7; }
.main { display: flex; flex-direction: column; min-width: 0; }

/* Address row */
.nav { height: 47px; display: flex; align-items: center; }
.nav-btn { width: 56px; display: flex; justify-content: center; align-items: center; }
.back { width: 70px; }
.reload { width: 40px; margin-right: 15px; }
.address { width: 1394px; height: 37px; border-radius: 19px; background: #fff; box-shadow: 0 1px 4px rgba(0, 0, 0, .08); display: flex; align-items: center; padding-left: 24px; }
.url { margin-left: 21px; flex: 1; font-size: 17px; letter-spacing: .02px; color: #767676; white-space: nowrap; }
.url b { font-weight: 400; color: #111; }
.read { margin-right: 29px; }
.star { margin-right: 22px; }
.ext { width: 67px; padding-left: 3px; }
.ext + .nav-btn { box-shadow: inset 1px 0 0 #cfcfcf; height: 24px; }
.avatar { width: 29px; height: 29px; border: 1px solid #fff; border-radius: 50%; display: flex; align-items: center; justify-content: center; background: #f3f3f3; }
.menu { width: 52px; padding-left: 10px; }

/* Favourites */
.bookmarks { height: 41px; margin-bottom: 2px; display: flex; align-items: center; padding-left: 17px; }
.bm { display: flex; align-items: center; gap: 11px; white-space: nowrap; letter-spacing: -.1px; flex: none; }
.bm svg { width: 20px; height: 20px; }
.bm.pg { gap: 13px; }
.bm.pg svg { width: 16px; }
.bm:nth-child(1) { width: 63px; }
.bm:nth-child(2) { width: 97px; }
.bm:nth-child(3) { width: 85px; }
.bm:nth-child(4) { width: 88px; }
.bm:nth-child(5) { width: 90px; }
.bm:nth-child(6) { width: 88px; }
.bm:nth-child(7) { width: 96px; }
.bm:nth-child(8) { width: 91px; }
.bm:nth-child(9) { width: 83px; }
.bm:nth-child(10) { width: 135px; }
.bm:nth-child(11) { width: 77px; }
.bm:nth-child(12) { width: 120px; }
.bm:nth-child(13) { width: 114px; }
.bm:nth-child(14) { width: 189px; }
.bm:nth-child(15) { width: 239px; }
.bm:nth-child(n+8) { gap: 10px; }
.bm.pg:nth-child(n+8) { gap: 12px; }
.bm-more { width: 9px; height: 16px; }
.other { margin-left: 16px; border-left: 1px solid #cfcfcf; height: 25px; padding-left: 11px; }

/* Figma window */
.app { width: 1860px; height: 885px; margin-left: 5px; border-radius: 10px 10px 9px 9px; overflow: hidden; display: flex; flex-direction: column; font-family: Inter, "Liberation Sans", sans-serif; font-size: 13.750px; letter-spacing: .05px; color: #333; box-shadow: 0 2px 3px rgba(0, 0, 0, .14); }
.fig-bar { height: 60px; flex: none; background: #2c2c2c; color: #fff; display: grid; grid-template-columns: 1fr 150px 1fr; box-shadow: inset 0 1px 0 #454545; }
.fig-left, .fig-mid, .fig-right { display: flex; align-items: center; }
.tool { width: 60px; height: 60px; display: flex; align-items: center; padding-left: 16px; gap: 8px; }
.tool.logo { width: 65px; padding-left: 17px; gap: 6px; }
.tool.frame { padding-left: 18px; gap: 6px; }
.tool.active { background: #0d99ff; }
.tool.solo { width: 50px; padding: 0; justify-content: center; }
.tool.right-shift { padding-left: 2px; }
.chev { width: 10px; height: 10px; color: #fff; }
.chev.gray { color: #b0b0b0; }
.fig-right { justify-content: flex-end; padding-right: 20px; }
.user { width: 63px; height: 40px; border-radius: 20px; background: #383838; display: flex; align-items: center; padding-left: 5px; gap: 9px; }
.user-m { width: 30px; height: 30px; border-radius: 50%; background: #f24822; display: grid; place-items: center; font-weight: 500; }
.share { width: 67px; height: 40px; margin-left: 10px; border-radius: 6px; background: #0d99ff; display: grid; place-items: center; font-weight: 500; }
.dev { width: 70px; height: 40px; margin-left: 10px; border-radius: 20px; background: #444; padding: 5px; }
.dev span { width: 30px; height: 30px; border-radius: 50%; background: #757575; display: grid; place-items: center; }
.play { display: flex; align-items: center; gap: 7px; margin-left: 31px; }
.zoom { display: flex; align-items: center; gap: 5px; margin-left: 20px; font-weight: 500; letter-spacing: -.05px; }

.fig-body { height: 825px; position: relative; display: grid; grid-template-columns: 360px 1fr 301px; }
.app b { color: #1e1e1e; }
.mute { color: #8c8c8c; }
.layers { background: #fff; border-right: 1px solid #e6e6e6; }
.layers-head { height: 51px; display: flex; align-items: center; padding-left: 22px; border-bottom: 1px solid #e6e6e6; }
.layers-head b { margin: 0 19px 0 12px; }
.page-name { margin-left: auto; }
.layers-head .chev { color: #b0b0b0; margin: 0 20px 0 5px; }
.layer-row { height: 40px; background: #e5f4ff; display: flex; align-items: center; gap: 12px; padding-left: 23px; }
.layer-row b { font-weight: 500; }

.canvas { background: #f5f5f5; padding: 91px 0 0 114px; }
.artboard { position: relative; width: 900px; height: 640px; background: repeating-linear-gradient(#ffe5e5 0 5px, #fff 5px 10px); box-shadow: 0 0 0 1px #2b9ff8, 0 0 0 1.500px #7cc4fb; }
.art-label { position: absolute; left: -1px; top: -20px; color: #0d8ff0; line-height: 18px; }
.cols { height: 640px; padding: 0 106.500px 0 106px; display: flex; gap: 12.500px; }
.cols i { flex: 1; background: rgba(255, 0, 0, .1); }
.handle { position: absolute; width: 10px; height: 10px; background: #fff; border: 2px solid #2b9ff8; }
.tl { left: -6px; top: -6px; }
.tr { right: -5px; top: -6px; }
.bl { left: -6px; bottom: -6px; }
.art-size { position: absolute; left: 405px; top: 648px; width: 90px; height: 22px; border-radius: 3px; background: #0d99ff; color: #fff; font-weight: 500; line-height: 22px; text-align: center; letter-spacing: -.05px; }

/* Inspector */
.panel { position: relative; height: 825px; overflow: hidden; background: #fff; border-left: 1px solid #e6e6e6; }
.panel-tabs { height: 50px; display: flex; align-items: center; padding-left: 20px; gap: 19px; }
.align { height: 51px; border-bottom: 1px solid #e6e6e6; display: flex; align-items: center; padding: 0 0 11px 21px; gap: 23px; }
.align svg { width: 17px; height: 17px; fill: none; stroke: #b3b3b3; }
.align .spread { width: 29px; margin-left: -5px; }
.sec { padding: 10px 0; border-bottom: 1px solid #e6e6e6; }
.row { height: 40px; display: flex; align-items: center; padding: 0 20px; }
.row > .chev { margin-left: 5px; }
.row.selected { background: #f4f4f4; padding-left: 11px; }
.off { color: #8c8c8c; font-weight: 500; }
.orient { width: 30px; height: 30px; border-radius: 3px; display: grid; place-items: center; }
.on { background: #e6e6e6; }
.ic { margin-left: 20px; }
.ic.shrink { width: 16px; height: 16px; margin: 0 2px 0 27px; }
.ic.sm { width: 16px; height: 16px; margin: 0 2px 0 24px; }
.ic.four { width: 12px; height: 12px; margin: 0 2px 0 0; }
.ic.eye { width: 18px; height: 12px; margin: 0 1px; }
.ic.eye + .sm { margin-left: 22px; }
.props { height: 40px; padding-left: 20px; display: grid; grid-template-columns: 30px 90px 30px 90px 20px; align-items: center; }
.props i { width: 18px; display: flex; justify-content: center; font-style: normal; color: #999; }
.props > svg { justify-self: center; }
.wide { white-space: nowrap; }
.check { width: 15px; height: 15px; border-radius: 2px; background: #0d99ff; display: grid; place-items: center; }
.lead { width: 19px; height: 18px; margin-right: 11px; }
.grid-btn { width: 38px; height: 38px; border-radius: 3px; background: #0d99ff; display: grid; place-items: center; margin-right: 1px; }
.grid-btn svg { width: 19px; height: 18px; }
.drop { width: 10px; height: 13px; margin: 0 15px 0 5px; }
.pct { margin-right: 23px; }
.white-chip { width: 20px; height: 20px; border: 1px solid #e6e6e6; margin-right: 10px; }
.hex { width: 91px; }
.scrollbar { position: absolute; right: 2px; top: 53px; width: 8px; height: 646px; border-radius: 4px; background: rgba(0, 0, 0, .15); }
.help { position: absolute; right: 20px; top: 765px; width: 40px; height: 40px; border-radius: 50%; background: #1e1e1e; display: grid; place-items: center; }

/* Columns popover */
.popover { position: absolute; left: 1260px; top: 473px; width: 300px; height: 331px; background: #fff; border-radius: 2px; box-shadow: 0 3px 18px rgba(0, 0, 0, .2), 0 5px 22px rgba(0, 0, 0, .16); }
.pop-head { height: 51px; border-bottom: 1px solid #e6e6e6; display: flex; align-items: center; padding: 0 18px 0 20px; }
.pop-head .chev { margin-left: 6px; }
.pop-x { width: 14px; height: 14px; }
.pop-grid { display: grid; grid-template-columns: 100px 100px 80px; grid-auto-rows: 40px; margin: 10px 0 0 20px; }
.pop-grid > * { display: flex; align-items: center; }
.pop-grid label { color: #999; }
.pop-grid .chev.gray { margin-left: 6px; }
.count { gap: 6px; margin-left: -10px; }
.field { width: 75px; height: 37px; border: 2px solid #0d99ff; border-radius: 2px; display: flex; align-items: center; padding-left: 8px; }
.field mark { background: #a0d3fb; color: #333; line-height: 16px; }
.count .chev { color: #1e1e1e; }
.swatch { width: 20px; height: 20px; margin-right: 9px; border-radius: 1px; background: linear-gradient(90deg, #f00 50%, rgba(255, 180, 180, .35) 50%), repeating-conic-gradient(#d6cccc 0 25%, #f6e6e6 0 50%) 0 0 / 6.600px 6.600px; }
.ten { padding-left: 19px; }
.auto { color: #b8b8b8; }

/* Side rail */
.rail { display: flex; flex-direction: column; align-items: center; height: 980px; }
.rail svg { width: 22px; height: 22px; margin-bottom: 28px; }
.rail .copilot { width: 31px; height: 31px; margin: 8px 0 25px; }
.rail .rail-plus { width: 15px; height: 15px; margin: 9px 0 auto; }
.rail-line { width: 35px; height: 2px; background: #bdbdbd; margin-bottom: 19px; }
.rail .rail-panel { width: 19px; height: 17px; margin-bottom: 31px; }
.rail .rail-gear { width: 22px; height: 22px; margin-bottom: 15px; }

/* Taskbar */
.taskbar { height: 60px; flex: none; display: grid; grid-template-columns: 1fr 385px 1fr; border-top: 1px solid #5a5044; color: #fff; background: linear-gradient(90deg, #461531 0, #451431 400px, #471326 560px, #511516 790px, #401e15 900px, #302014 1200px, #2d2414 1560px, #302716 1920px); }
.apps { grid-column: 2; display: flex; }
.slot { position: relative; width: 55px; display: grid; place-items: center; padding-left: 1px; }
.slot svg { position: relative; width: 30px; height: 30px; }
.run::after { content: ""; position: absolute; left: 24px; bottom: 6px; width: 8px; height: 4px; border-radius: 2px; background: #a39b96; }
.current::before { content: ""; position: absolute; left: 4px; top: 4px; width: 44px; height: 50px; border-radius: 5px; background: rgba(255, 255, 255, .07); border: 1px solid rgba(255, 255, 255, .08); box-shadow: 5px 0 0 -1px rgba(255, 255, 255, .06); }
.current::after { content: ""; position: absolute; left: 19px; bottom: 6px; width: 20px; height: 4px; border-radius: 2px; background: #4cc2ff; }
.tray { display: flex; align-items: center; justify-content: flex-end; padding: 0 26px 2px 0; font-size: 14.500px; line-height: 20px; letter-spacing: 0; }
.t-up { width: 14px; height: 9px; margin-right: 23px; }
.t-nav { width: 20px; height: 20px; margin-right: 20px; }
.lang { width: 36px; text-align: center; margin-right: 20px; letter-spacing: -.2px; }
.t-mon { width: 21px; height: 20px; margin-right: 9px; }
.t-mute { width: 20px; height: 14px; margin-right: 10px; }
.t-bat { width: 21px; height: 18px; }
.clock { width: 97px; text-align: right; margin-right: 10px; }
.t-bell { width: 18px; height: 20px; }
```
